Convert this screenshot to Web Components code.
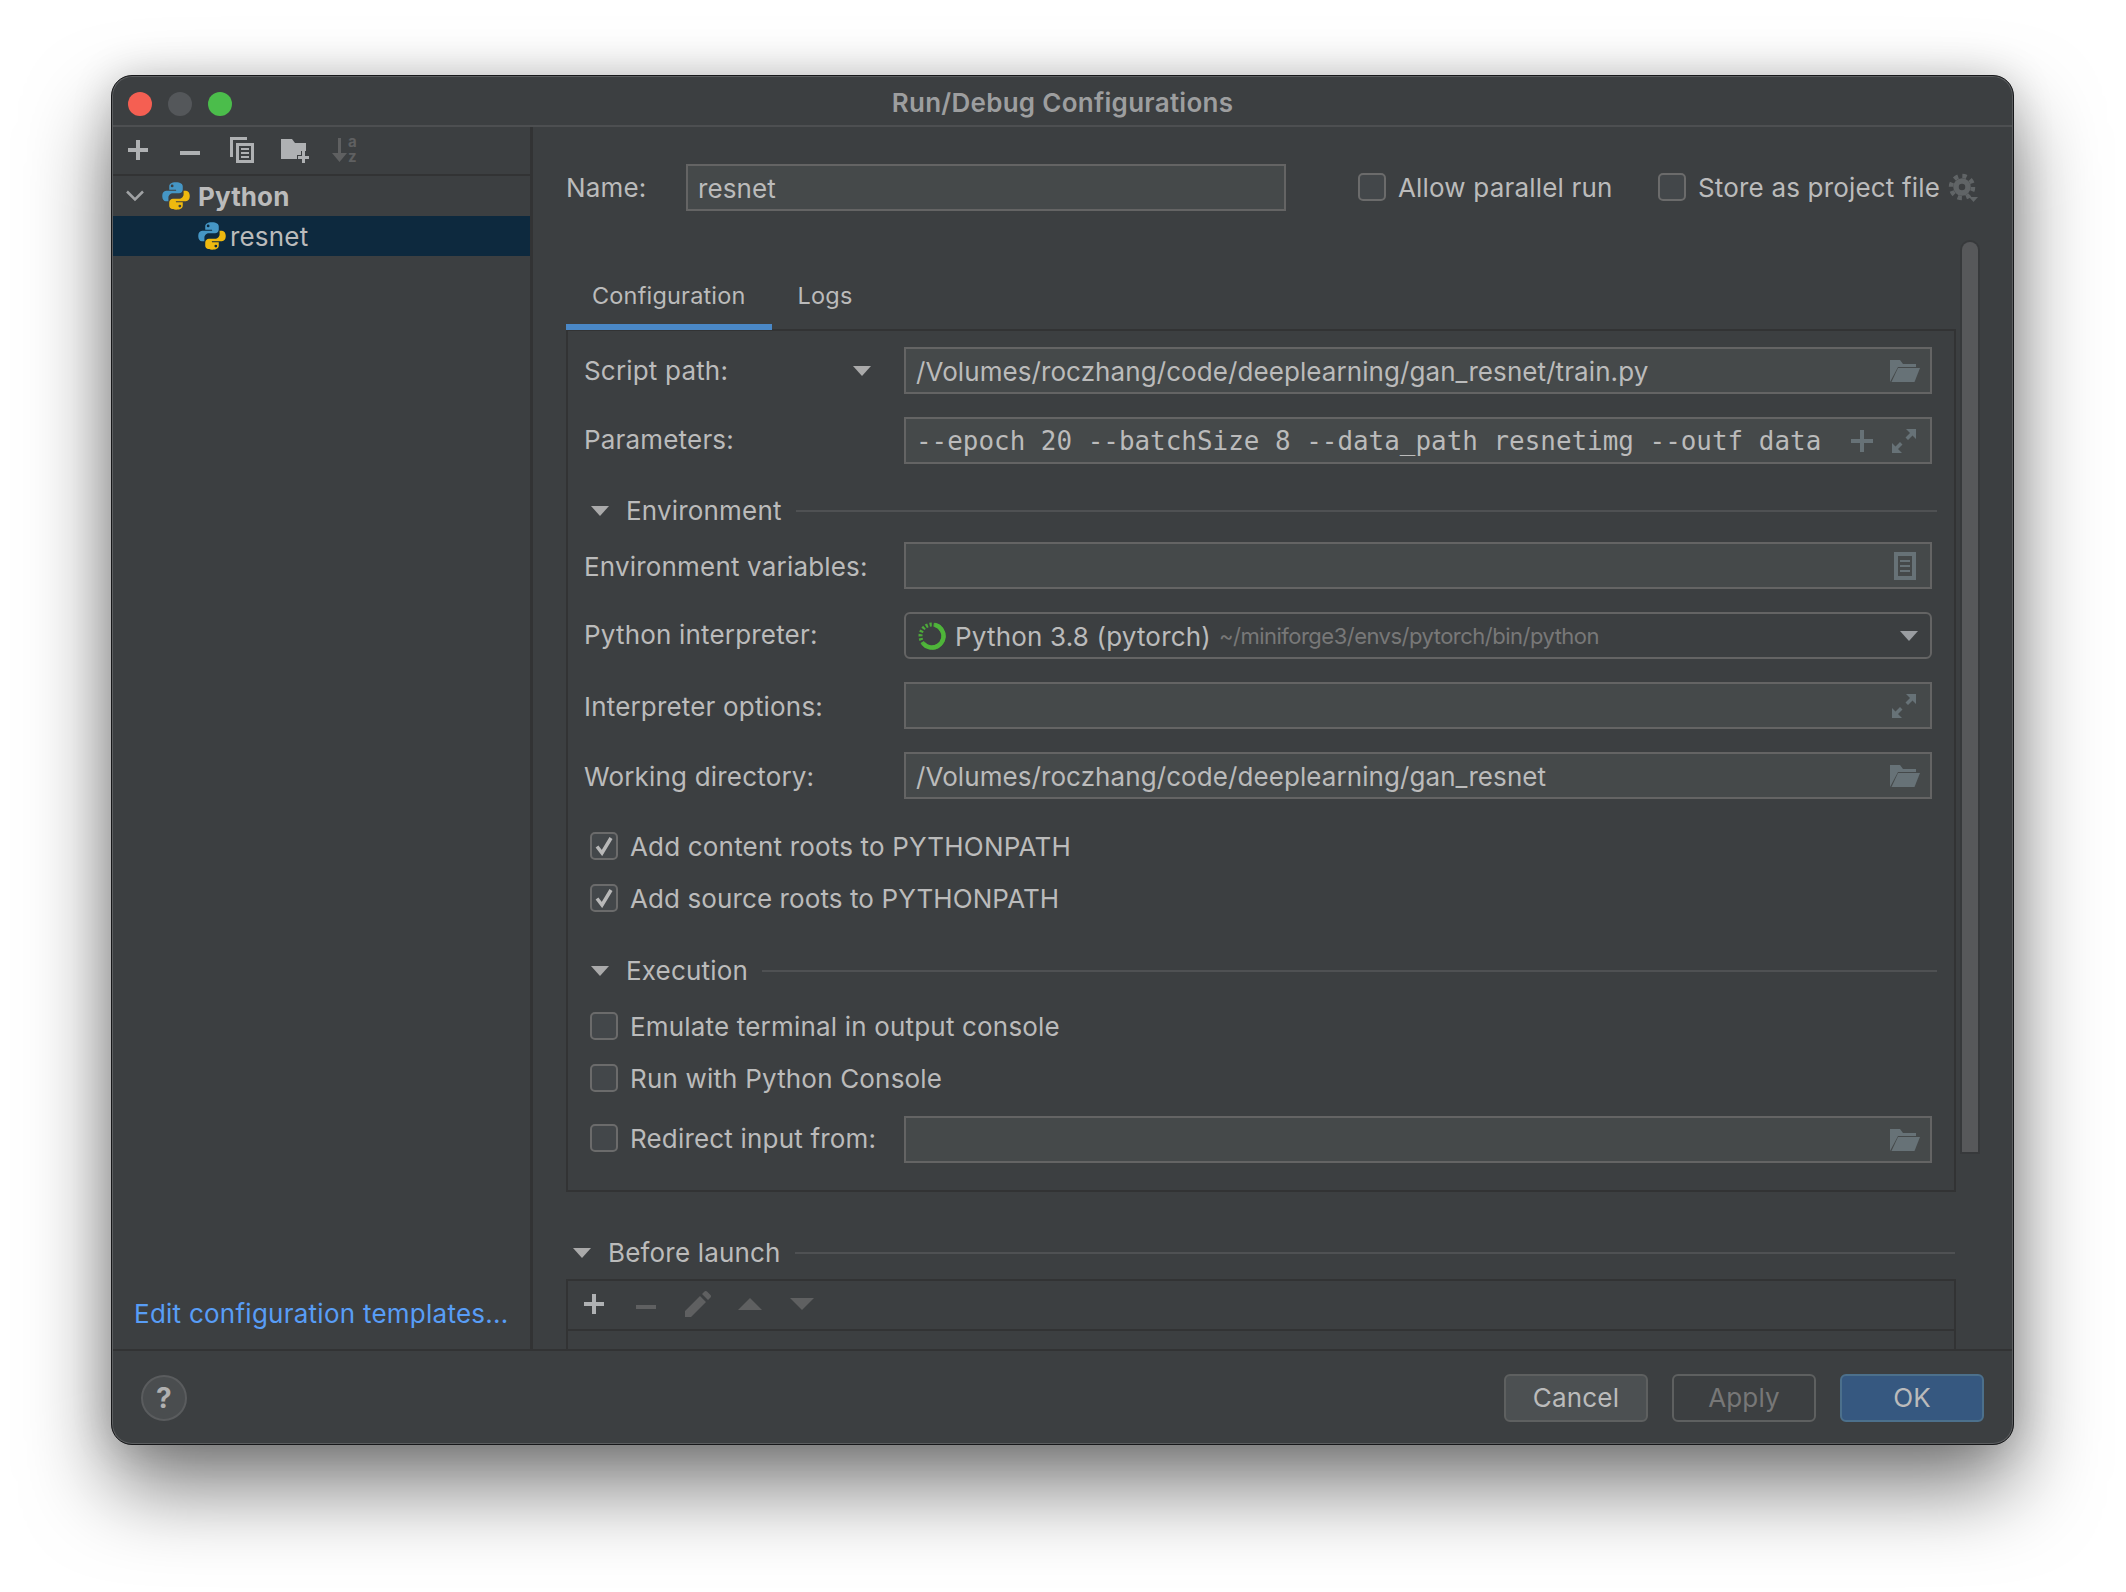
<!DOCTYPE html>
<html>
<head>
<meta charset="utf-8">
<title>Run/Debug Configurations</title>
<style>
  html, body { margin: 0; height: 100%; background: #fff; overflow: hidden; }
  body { box-sizing: border-box; padding: 75px 0 0 111px; font-family: Inter, "Liberation Sans", sans-serif; }
</style>
</head>
<body>

<template id="mac-window-template">
  <style>
    :host { display: flex; flex-direction: column; box-sizing: border-box; width: 1903px; height: 1370px; padding: 1px;
      background: #3c3f41; border: 1px solid #17181a; border-radius: 21px; color: #bbb; font-size: 26px; letter-spacing: .18px;
      box-shadow: inset 0 0 0 1px #5c5e60, 0 42px 84px rgba(0,0,0,.52), 0 0 40px rgba(0,0,0,.16); overflow: hidden; }
    .bar { flex: none; display: flex; align-items: center; position: relative; height: 48px; border-bottom: 2px solid #4d4f51; }
    .lights { display: flex; gap: 16px; padding: 5px 0 0 15px; }
    .lights i { width: 24px; height: 24px; border-radius: 50%; background: #54575a; }
    .lights i:first-child { background: #f55f52; }
    .lights i:last-child { background: #4bbd4b; }
    .title { position: absolute; left: 0; right: 0; padding-top: 2px; text-align: center; font-weight: 600; color: #9d9e9f; letter-spacing: .28px; }
    .main { flex: 1; min-height: 0; display: flex; overflow: hidden; }
    .foot { flex: none; height: 92px; border-top: 2px solid #323334; }
  </style>
  <div class="bar"><div class="lights"><i></i><i></i><i></i></div><div class="title"><slot name="title"></slot></div></div>
  <div class="main"><slot></slot></div>
  <div class="foot"><slot name="footer"></slot></div>
</template>

<template id="config-sidebar-template">
  <style>
    :host { flex: none; display: flex; flex-direction: column; width: 417px; border-right: 3px solid #323334; }
    .tools { flex: none; display: flex; box-sizing: border-box; height: 49px; margin-left: -1px; padding-bottom: 1px; border-bottom: 2px solid #323334; }
    .tree { flex: 1; }
    .link { flex: none; padding: 0 0 19px 21px; line-height: 32px; color: #589df6; white-space: nowrap; letter-spacing: .25px; }
  </style>
  <div class="tools"><slot name="tools"></slot></div>
  <div class="tree"><slot></slot></div>
  <div class="link"><slot name="link"></slot></div>
</template>

<template id="tree-row-template">
  <style>
    :host { display: flex; align-items: center; height: 40px; white-space: nowrap; }
    :host([selected]) { background: #0d293e; padding-left: 85px; }
    :host([group]) { font-weight: 700; padding-left: 13px; letter-spacing: .1px; }
    .kids { display: flex; align-items: center; }
  </style>
  <div class="kids"><slot></slot></div>
</template>

<template id="tool-btn-template">
  <style>
    :host { flex: none; display: flex; align-items: center; justify-content: center; width: 52px; color: #afb1b3; }
    :host([off]) { color: #5f6061; }
  </style>
  <slot></slot>
</template>

<template id="cfg-field-template">
  <style>
    :host { display: flex; align-items: center; box-sizing: border-box; height: 47px; padding: 0 12px 0 10px;
      background: #45494a; border: 2px solid #646464; white-space: nowrap; color: #bbb; letter-spacing: .08px; }
    :host([combo]) { background: none; border-radius: 6px; padding-left: 8px; letter-spacing: .18px; }
    :host([mono]) { font-family: "DejaVu Sans Mono", "Liberation Mono", monospace; font-size: 25.9px; letter-spacing: .02px; }
    .text { flex: 1; min-width: 0; display: flex; align-items: center; padding-top: 1px; }
    .icons { flex: none; display: flex; align-items: center; }
  </style>
  <div class="text"><slot></slot></div>
  <div class="icons"><slot name="icons"></slot></div>
</template>

<template id="cfg-row-template">
  <style>
    :host { display: grid; grid-template-columns: 320px 1028px; align-items: center; }
    .lab { display: flex; align-items: center; justify-content: space-between; padding-right: 33px; }
  </style>
  <div class="lab"><slot name="label"></slot></div>
  <slot></slot>
</template>

<template id="check-box-template">
  <style>
    :host { display: flex; align-items: center; gap: 12px; height: 27px; white-space: nowrap; }
    .box { flex: none; display: flex; align-items: center; justify-content: center; box-sizing: border-box; width: 28px; height: 28px;
      background: #43474a; border: 2px solid #6b6b6b; border-radius: 5px; }
    svg { display: none; }
    :host([checked]) svg { display: block; }
    .label { padding-top: 1px; }
  </style>
  <div class="box"><svg width="18" height="20" viewBox="0 0 18 20"><path d="M2 10.500l5 6.500 9-15" fill="none" stroke="#b8b8b8" stroke-width="3.500"/></svg></div>
  <div class="label"><slot></slot></div>
</template>

<template id="group-title-template">
  <style>
    :host { display: flex; align-items: center; height: 30px; white-space: nowrap; }
    .tri { flex: none; width: 0; height: 0; margin-right: 17px; border: 9px solid transparent; border-top: 10px solid #aaa; border-bottom: 0; }
    .txt { padding-bottom: 1px; }
    .line { flex: 1; height: 2px; margin-left: 14px; background: #4f5153; }
  </style>
  <div class="tri"></div><div class="txt"><slot></slot></div><div class="line"></div>
</template>

<template id="tab-strip-template">
  <style>
    :host { display: flex; position: relative; z-index: 1; height: 68px; font-size: 23.5px; }
    .tab { box-sizing: border-box; padding: 15px 26px 0; line-height: 38px; }
    .on { border-bottom: 6px solid #4a88c7; }
  </style>
  <div class="tab on"><slot name="active"></slot></div>
  <div class="tab"><slot></slot></div>
</template>

<template id="cfg-panel-template">
  <style>
    :host { display: block; margin-top: -1px; padding: 16px 0 27px 16px; border: 2px solid #323334; }
  </style>
  <slot></slot>
</template>

<template id="launch-box-template">
  <style>
    :host { display: block; border: 2px solid #323334; }
    .tools { display: flex; height: 46px; padding-bottom: 2px; border-bottom: 2px solid #323334; }
    .rest { height: 60px; }
  </style>
  <div class="tools"><slot></slot></div>
  <div class="rest"></div>
</template>

<template id="dlg-button-template">
  <style>
    :host { display: flex; align-items: center; justify-content: center; box-sizing: border-box; width: 144px; height: 48px;
      background: #4c5052; border: 2px solid #5e6060; border-radius: 6px; color: #bbb; }
    :host([off]) { background: none; color: #777; }
    :host([primary]) { background: #365880; border-color: #4c708c; }
  </style>
  <slot></slot>
</template>

<template id="dialog-footer-template">
  <style>
    :host { display: flex; align-items: center; justify-content: space-between; box-sizing: border-box; height: 100%; padding: 1px 28px 0; }
    .help { display: flex; align-items: center; justify-content: center; box-sizing: border-box; width: 46px; height: 46px;
      border-radius: 50%; background: #4a4d4f; border: 2px solid #5a5c5e; font-weight: 700; font-size: 28px; color: #b0b0b0; }
    .btns { display: flex; gap: 24px; }
  </style>
  <div class="help">?</div>
  <div class="btns"><slot></slot></div>
</template>

<template id="run-config-form-template">
  <style>
    :host { flex: 1; min-width: 0; display: flex; flex-direction: column; overflow: hidden; }
    .name { flex: none; display: flex; align-items: center; height: 47px; margin: 37px 0 31px 33px; }
    .scroller { flex: 1; min-height: 0; display: flex; }
    .body { flex: none; width: 1390px; margin-left: 33px; padding-top: 20px; }
    .thumb { flex: none; width: 16px; height: 910px; margin-left: 6px; background: #57585a; border-radius: 8px 8px 0 0;
      box-shadow: 0 0 0 2px #37393b; }
  </style>
  <div class="name"><slot name="name"></slot></div>
  <div class="scroller">
    <div class="body"><slot></slot></div>
    <div class="thumb"></div>
  </div>
</template>

<script>
  // small python logo, same drawing for both tree rows
  var snake = 'M11.9.2C8 .2 6.2 1.6 6.2 3.8v2.8h5.9v.9H3.6C1.5 7.5.2 9.3.2 12c0 2.7 1.3 4.6 3.2 4.6h2.1v-3c0-2.2 1.8-3.9 3.9-3.9h5.2c1.8 0 3.2-1.5 3.2-3.3V3.8C17.800 1.700 15.800.2 11.900.2zM8.700 2.200a1.200 1.200 0 1 1 0 2.400 1.200 1.200 0 0 1 0-2.400z';

  var ICONS = {
    plus: [20, 20, '<path d="M8 0h4v8h8v4h-8v8H8v-8H0V8h8z" fill="currentColor"/>'],
    minus: [20, 4, '<rect width="20" height="4" fill="currentColor"/>'],
    copy: [24, 26, '<path d="M0 0h17v3H3v17H0z" fill="currentColor"/><path d="M6 6h18v20H6zM9 9v14h12V9z" fill="currentColor" fill-rule="evenodd"/><path d="M11 11h8v2h-8zM11 15h8v2h-8zM11 19h8v2h-8z" fill="currentColor"/>'],
    newfolder: [28, 24, '<path d="M0 0h11l3 4h11v8h-5v4h-4v4H0z" fill="currentColor"/><path d="M21 12h3v5h4v3h-4v4h-3v-4h-4v-3h4z" fill="currentColor"/>'],
    sort: [28, 38, '<path d="M6 7h3v15h6l-7.500 9L0 22h6z" fill="#5f6061"/><text x="16" y="16" font-family="Inter, sans-serif" font-size="15" font-weight="700" fill="#5f6061">a</text><text x="16" y="31" font-family="Inter, sans-serif" font-size="15" font-weight="700" fill="#5f6061">z</text>'],
    chevron: [18, 12, '<path d="M1 1.500l8 8 8-8" fill="none" stroke="#a0a2a4" stroke-width="2.500"/>'],
    python: [28, 28, '<g transform="scale(1.1667)"><path d="' + snake + '" fill="#4596c5" fill-rule="evenodd"/><path d="' + snake + '" fill="#eeb90f" fill-rule="evenodd" transform="rotate(180 12 12)"/></g>'],
    down: [18, 10, '<path d="M0 0h18L9 10z" fill="currentColor"/>'],
    up: [24, 12, '<path d="M12 0l12 12H0z" fill="currentColor"/>'],
    down2: [24, 12, '<path d="M0 0h24L12 12z" fill="currentColor"/>'],
    pencil: [26, 26, '<path d="M0 26v-6L15 5l6 6L6 26zM17 3l2.500-2.500c1-.7 1.500-.7 2.500 0l3.500 3.500c.7 1 .7 1.500 0 2.500L23 9z" fill="currentColor"/>'],
    folder: [30, 22, '<path d="M0 22V0h10l3 4h13v3H8L0 22z" fill="#677277"/><path d="M8 8h22l-5.500 14H1.500z" fill="#677277"/>'],
    doc: [22, 28, '<path d="M0 0h22v28H0zM4 4v20h14V4z" fill="#677277" fill-rule="evenodd"/><path d="M6 8h10v2H6zM6 13h10v2H6zM6 18h10v2H6z" fill="#677277"/>'],
    expand: [24, 24, '<path d="M14 0h10v10l-3.500-3.500-4.500 4.500-2.500-2.500 4.500-4.500zM0 14l3.500 3.500 4.500-4.500 2.500 2.500-4.500 4.500L10 24H0z" fill="#677277"/>'],
    smallplus: [22, 22, '<path d="M9 0h4v9h9v4h-9v9H9v-9H0V9h9z" fill="#677277"/>'],
    gear: [30, 30, '<circle cx="14" cy="14" r="6" fill="none" stroke="#606466" stroke-width="5.500"/><circle cx="14" cy="14" r="11" fill="none" stroke="#606466" stroke-width="4.500" stroke-dasharray="4.320 4.320"/><path d="M21 24h9l-4.500 5z" fill="#606466"/>'],
    conda: [28, 28, '<circle cx="14" cy="14" r="11.500" fill="none" stroke="#4fb53a" stroke-width="4.500" stroke-dasharray="43 100" transform="rotate(-75 14 14)"/><circle cx="14" cy="14" r="11.500" fill="none" stroke="#4fb53a" stroke-width="4" stroke-dasharray="2.200 1.800" transform="rotate(138 14 14)" pathLength="72" opacity=".9"/>']
  };

  // base class: clones the template called <tag>-template into an open shadow root
  class TemplatedElement extends HTMLElement {
    constructor() {
      super();
      var template = document.querySelector('#' + this.localName + '-template');
      this.attachShadow({mode: 'open'}).appendChild(template.content.cloneNode(true));
    }
  }

  ['mac-window', 'config-sidebar', 'tree-row', 'tool-btn', 'cfg-field', 'cfg-row', 'check-box', 'group-title',
   'tab-strip', 'cfg-panel', 'launch-box', 'dlg-button', 'dialog-footer', 'run-config-form'].forEach(function (tag) {
    customElements.define(tag, class extends TemplatedElement {});
  });

  class IjIcon extends HTMLElement {
    constructor() {
      super();
      this.attachShadow({mode: 'open'});
    }
    connectedCallback() {
      var icon = ICONS[this.getAttribute('name')];
      this.shadowRoot.innerHTML = '<style>:host{display:block;flex:none;line-height:0}</style>' +
        '<svg width="' + icon[0] + '" height="' + icon[1] + '" viewBox="0 0 ' + icon[0] + ' ' + icon[1] + '">' + icon[2] + '</svg>';
    }
  }
  customElements.define('ij-icon', IjIcon);
</script>

<mac-window>
  <span slot="title">Run/Debug Configurations</span>

  <config-sidebar>
    <tool-btn slot="tools"><ij-icon name="plus"></ij-icon></tool-btn>
    <tool-btn slot="tools"><ij-icon name="minus"></ij-icon></tool-btn>
    <tool-btn slot="tools"><ij-icon name="copy"></ij-icon></tool-btn>
    <tool-btn slot="tools"><ij-icon name="newfolder" style="margin:2px 0 0 2px"></ij-icon></tool-btn>
    <tool-btn slot="tools" off><ij-icon name="sort"></ij-icon></tool-btn>

    <tree-row group><ij-icon name="chevron" style="margin-right:18px"></ij-icon><ij-icon name="python" style="margin-right:8px"></ij-icon>Python</tree-row>
    <tree-row selected><ij-icon name="python" style="margin-right:4px"></ij-icon>resnet</tree-row>

    <span slot="link">Edit configuration templates...</span>
  </config-sidebar>

  <run-config-form>
    <span slot="name" style="flex:none;width:120px">Name:</span>
    <cfg-field slot="name" style="flex:none;width:600px">resnet</cfg-field>
    <check-box slot="name" style="flex:none;width:300px;margin:0 0 2px 72px">Allow parallel run</check-box>
    <check-box slot="name" style="flex:none;width:290px;margin-bottom:2px">Store as project file</check-box>
    <ij-icon slot="name" name="gear"></ij-icon>

    <tab-strip><span slot="active">Configuration</span>Logs</tab-strip>

    <cfg-panel>
      <cfg-row>
        <span slot="label">Script path:</span><ij-icon slot="label" name="down" style="color:#aaa"></ij-icon>
        <cfg-field>/Volumes/roczhang/code/deeplearning/gan_resnet/train.py<ij-icon slot="icons" name="folder" style="margin-right:-2px"></ij-icon></cfg-field>
      </cfg-row>
      <cfg-row style="margin-top:23px">
        <span slot="label" style="padding-bottom:3px">Parameters:</span>
        <cfg-field mono>--epoch 20 --batchSize 8 --data_path resnetimg --outf data<ij-icon slot="icons" name="smallplus" style="margin-right:19px"></ij-icon><ij-icon slot="icons" name="expand" style="margin-right:2px"></ij-icon></cfg-field>
      </cfg-row>

      <group-title style="margin:32px 17px 16px 7px">Environment</group-title>

      <cfg-row>
        <span slot="label" style="padding-top:2px">Environment variables:</span>
        <cfg-field><ij-icon slot="icons" name="doc" style="margin-right:2px"></ij-icon></cfg-field>
      </cfg-row>
      <cfg-row style="margin-top:23px">
        <span slot="label" style="padding-bottom:2px">Python interpreter:</span>
        <cfg-field combo>
          <ij-icon name="conda" style="margin-right:9px;margin-left:4px"></ij-icon>Python 3.8 (pytorch)<span style="font-size:22px;color:#787878;margin-left:8px;letter-spacing:-.51px">~/miniforge3/envs/pytorch/bin/python</span>
          <ij-icon slot="icons" name="down" style="color:#9a9da1"></ij-icon>
        </cfg-field>
      </cfg-row>
      <cfg-row style="margin-top:23px">
        <span slot="label" style="padding-top:2px">Interpreter options:</span>
        <cfg-field><ij-icon slot="icons" name="expand" style="margin-right:2px"></ij-icon></cfg-field>
      </cfg-row>
      <cfg-row style="margin-top:23px">
        <span slot="label" style="padding-top:2px">Working directory:</span>
        <cfg-field>/Volumes/roczhang/code/deeplearning/gan_resnet<ij-icon slot="icons" name="folder" style="margin-right:-2px"></ij-icon></cfg-field>
      </cfg-row>

      <check-box checked style="margin:33px 0 0 6px">Add content roots to PYTHONPATH</check-box>
      <check-box checked style="margin:25px 0 0 6px;letter-spacing:.1px">Add source roots to PYTHONPATH</check-box>

      <group-title style="margin:45px 17px 26px 7px">Execution</group-title>

      <check-box style="margin-left:6px">Emulate terminal in output console</check-box>
      <check-box style="margin:25px 0 25px 6px">Run with Python Console</check-box>
      <cfg-row>
        <check-box slot="label" style="margin:0 0 3px 6px">Redirect input from:</check-box>
        <cfg-field><ij-icon slot="icons" name="folder" style="margin-right:-2px"></ij-icon></cfg-field>
      </cfg-row>
    </cfg-panel>

    <group-title style="margin:46px 1px 11px 7px">Before launch</group-title>

    <launch-box>
      <tool-btn><ij-icon name="plus"></ij-icon></tool-btn>
      <tool-btn off><ij-icon name="minus"></ij-icon></tool-btn>
      <tool-btn off><ij-icon name="pencil"></ij-icon></tool-btn>
      <tool-btn off><ij-icon name="up"></ij-icon></tool-btn>
      <tool-btn off><ij-icon name="down2"></ij-icon></tool-btn>
    </launch-box>
  </run-config-form>

  <dialog-footer slot="footer">
    <dlg-button>Cancel</dlg-button>
    <dlg-button off>Apply</dlg-button>
    <dlg-button primary>OK</dlg-button>
  </dialog-footer>
</mac-window>

</body>
</html>
